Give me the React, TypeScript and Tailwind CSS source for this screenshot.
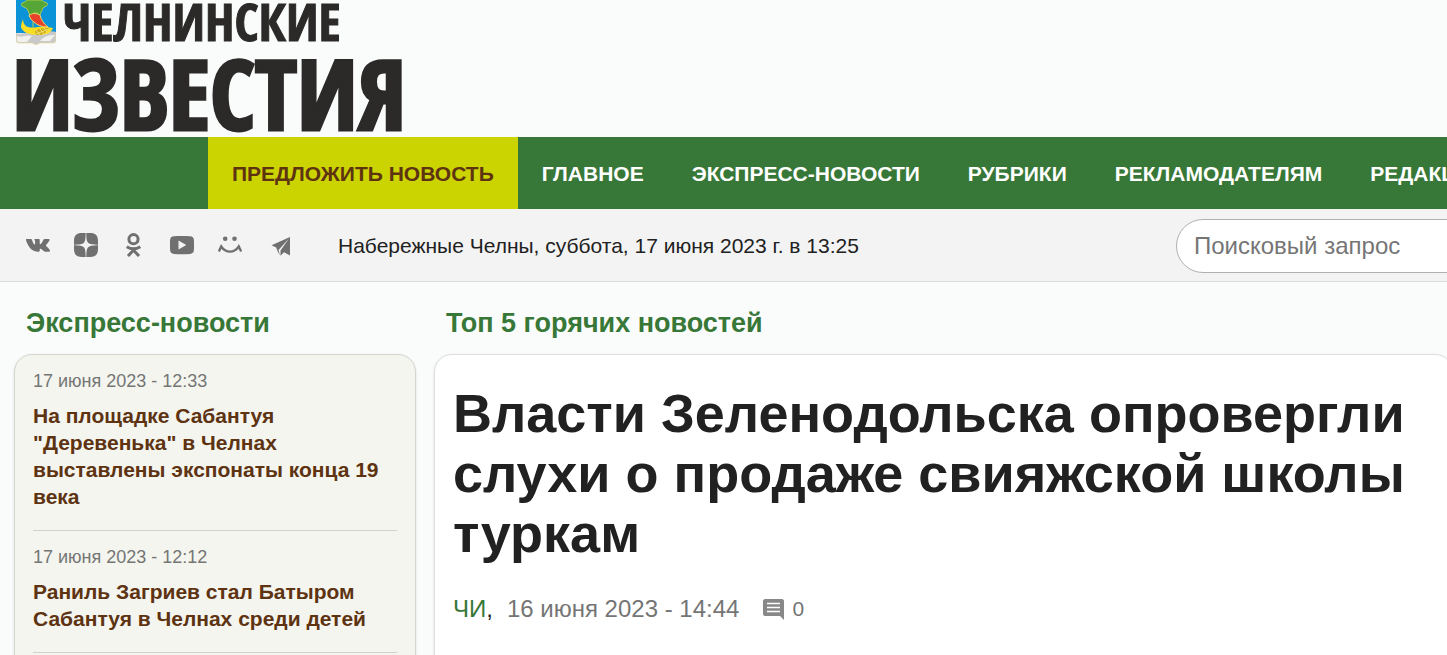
import React, { useState } from "react";

const navLinks = [
  "Главное",
  "Экспресс-новости",
  "Рубрики",
  "Рекламодателям",
  "Редакция",
];

const expressNews = [
  {
    date: "17 июня 2023 - 12:33",
    title:
      'На площадке Сабантуя "Деревенька" в Челнах выставлены экспонаты конца 19 века',
  },
  {
    date: "17 июня 2023 - 12:12",
    title: "Раниль Загриев стал Батыром Сабантуя в Челнах среди детей",
  },
];

const CityEmblem = () => (
  <svg viewBox="0 0 40 45" className="h-[45px] w-10 shrink-0" aria-hidden="true">
    <path d="M0 0h40v33H0z" fill="#0b93d8" />
    <path
      d="M0 33c5 2 8-1 13 0s9 2 14 0 9-2 13-1v8c0 2-1 3-3 3H24l-4 2-4-2H3c-2 0-3-1-3-3z"
      fill="#c9c9c9"
    />
    <path
      d="M1 36c6 2 9-2 15 0l-5 6H3c-1 0-2-1-2-2zM24 41c4-5 9-6 15-6l-5 6z"
      fill="#f0f0ee"
    />
    <path
      d="M0 33v7c0 2 1 3 3 3h13l4 2 4-2h13c2 0 3-1 3-3v-8"
      fill="none"
      stroke="#e9dc9a"
      strokeWidth=".7"
    />
    <path
      d="M7 19c0 4 2 7 5 8 6 2 14-2 19 0l6 1c-2 5-7 7-14 7-10 0-17-3-18-8 0-3 1-5 2-8z"
      fill="#f8de22"
    />
    <path d="M19 31c4-3 9-3 14-3-2 4-5 6-9 7h-4z" fill="#cda91c" />
    <path
      d="M20 30l4 5m0-6 4 5m0-6 3 4m-11 2 13-5"
      stroke="#fbf07e"
      strokeWidth=".8"
      fill="none"
    />
    <path
      d="M13 15c3-2 7-2 11 0 1 5 4 9 8 12-6 0-11-2-14-5-3-2-4-4-5-7z"
      fill="#e8432a"
      stroke="#f7d868"
      strokeWidth="1"
    />
    <path
      d="M11 0h14c2 1 3 2 6 3 1 2 0 3-3 4-2 1-1 3-3 5l-1 3c-2-2-3-2-5-2s-4 1-5 2l-2-4c0-2-2-3-4-4-3-1-3-2-2-4 3-1 4-2 5-3z"
      fill="#55a637"
      stroke="#d9dc52"
      strokeWidth=".7"
    />
    <path d="M17 22v5" stroke="#f8de22" strokeWidth=".8" />
  </svg>
);

const VkIcon = () => (
  <svg viewBox="0 0 24 24" className="size-6" fill="currentColor">
    <path d="M0 6h5c.6 0 .8.300 1 .9 1 3 2 4.600 2.700 4.600.3 0 .4-.3.400-1V8.200C9 7.200 8.300 7 8.300 6.500c0-.4.300-.6.700-.6h3.800c.7 0 .9.300.9 1v3.400c0 .6.200.9.500.9.9 0 2.400-2.500 3.200-4.400.3-.6.6-.8 1.200-.8h4c1 0 1.200.5.900 1.200-.6 1.500-3.500 4.600-3.500 5.200 0 .9 3.800 3.400 4 5.200.1.800-.4 1.200-1.300 1.200h-3.500c-1.600 0-3.300-3-4.700-3-.7 0-.8.5-.8 1.500s-.4 1.500-1.300 1.500C5.500 18.800 1.700 13 0 7z" />
  </svg>
);

const ZenIcon = () => (
  <svg viewBox="0 0 24 24" className="size-6" fill="currentColor">
    <path d="M11.700 0C11.600 6 11.200 8 10 9.700 8 11.200 5.500 11.600 0 11.700V8C0 2.500 2.500 0 8 0zM12.300 0H16c5.500 0 8 2.500 8 8v3.700c-5.500-.1-8-.5-9.900-2C12.600 8 12.400 6 12.300 0zM0 12.300c5.500.1 8.200.6 10 2.100 1.300 1.600 1.600 4 1.700 9.600H8c-5.500 0-8-2.500-8-8zM24 12.300V16c0 5.500-2.500 8-8 8h-3.700c.1-5.600.4-8 1.800-9.600 1.800-1.500 4.400-2 9.900-2.100z" />
  </svg>
);

const OkIcon = () => (
  <svg
    viewBox="0 0 24 24"
    className="size-6"
    fill="none"
    stroke="currentColor"
    strokeWidth="3"
  >
    <circle cx="11.500" cy="6.200" r="4.600" />
    <path d="M4.700 13.700c4.500 2.900 9.100 2.900 13.600 0M6 23l5.500-5.800L17 23" />
  </svg>
);

const YoutubeIcon = () => (
  <svg viewBox="0 0 24 24" className="size-6" fill="currentColor">
    <path
      fillRule="evenodd"
      d="M4 3.200c5-.4 11-.4 16 0 2.500 0 3.800 1.300 3.900 3.800.2 3.500.2 6.500 0 10-.1 2.500-1.400 3.800-3.900 3.900-5 .3-11 .3-16 0-2.500-.1-3.800-1.400-3.900-3.900-.2-3.500-.2-6.500 0-10C.2 4.500 1.500 3.200 4 3.200zM8.500 7.500v9L16.300 12z"
    />
  </svg>
);

const SmileIcon = () => (
  <svg viewBox="0 0 24 24" className="size-6">
    <circle cx="7.200" cy="5.800" r="2.300" fill="currentColor" />
    <circle cx="16.500" cy="5.800" r="2.300" fill="currentColor" />
    <path
      d="M.9 18.500 3.200 13.400c4.500 7 13.100 7 17.600 0l2.400 5.100"
      fill="none"
      stroke="currentColor"
      strokeWidth="2.400"
    />
  </svg>
);

const TelegramIcon = () => (
  <svg viewBox="0 0 24 24" className="size-6" fill="currentColor">
    <path d="M24 4v18.500l-6-3.200-3.500 3.500v-5.300L23 5.500 12.500 17l1.400 5C12 19.500 11.300 17.500 10.200 14.500L5.500 12.200z" />
  </svg>
);

const CommentIcon = () => (
  <svg viewBox="0 0 21 21" className="size-[21px]" aria-hidden="true">
    <path d="M2 0h17c1 0 2 1 2 2v19l-4-4H2c-1 0-2-1-2-2V2C0 1 1 0 2 0z" fill="#888" />
    <path d="M4 4.500h13M4 8.500h13M4 12.500h13" stroke="#fff" strokeWidth="1.700" />
  </svg>
);

const socials = [
  { name: "ВКонтакте", icon: <VkIcon /> },
  { name: "Дзен", icon: <ZenIcon /> },
  { name: "Одноклассники", icon: <OkIcon /> },
  { name: "YouTube", icon: <YoutubeIcon /> },
  { name: "Мой мир", icon: <SmileIcon /> },
  { name: "Telegram", icon: <TelegramIcon /> },
];

const Header = () => (
  <header>
    <a
      href="#"
      className="flex h-[137px] w-fit flex-col pl-3 font-['Open_Sans_Condensed','Liberation_Sans_Narrow',sans-serif] font-bold uppercase text-[#2b2a29]"
    >
      <span className="flex h-[45px] items-start gap-1.5 pl-1">
        <CityEmblem />
        <span className="text-[52px] leading-[42px] [-webkit-text-stroke:1px]">
          Челнинские
        </span>
      </span>
      <span className="text-[97px] leading-[94px] [-webkit-text-stroke:3px]">
        Известия
      </span>
    </a>
    <nav className="flex h-[72px] items-stretch bg-[#377737] pl-52 text-[21px] font-bold uppercase whitespace-nowrap text-white">
      <a
        href="#"
        className="flex items-center bg-[#cbd300] px-6 pt-0.5 text-[#5e3312]"
      >
        Предложить новость
      </a>
      {navLinks.map((link) => (
        <a key={link} href="#" className="flex items-center px-6 pt-0.5">
          {link}
        </a>
      ))}
    </nav>
  </header>
);

const InfoBar = () => {
  const [query, setQuery] = useState("");

  return (
    <div className="flex h-[73px] items-center border-b border-[#dcdcdc] bg-[#f3f3f3] pt-0.5 pr-3.5 pl-[26px]">
      <div className="flex gap-6 pb-0.5 text-[#707070]">
        {socials.map((social) => (
          <a key={social.name} href="#" aria-label={social.name}>
            {social.icon}
          </a>
        ))}
      </div>
      <p className="ml-12 text-[21px]">
        Набережные Челны, суббота, 17 июня 2023 г. в 13:25
      </p>
      <input
        type="search"
        aria-label="Поисковый запрос"
        placeholder="Поисковый запрос"
        value={query}
        onChange={(e) => setQuery(e.target.value)}
        className="-mr-3.5 ml-auto h-[54px] w-[291px] rounded-l-full border border-[#b0b0b0] bg-white px-[17px] text-2xl placeholder:text-[#757575]"
      />
    </div>
  );
};

const ExpressNews = () => (
  <section className="w-[402px] shrink-0">
    <h2 className="px-3 text-[27px] leading-9 font-bold text-[#377737]">
      Экспресс-новости
    </h2>
    <ul className="mt-[13px] rounded-[18px] border border-[#d3d6cd] bg-[#f3f5ee] px-[18px] pb-20 shadow-sm">
      {expressNews.map((item) => (
        <li
          key={item.date}
          className="border-b border-[#d0d2cb] pt-[15px] pb-5"
        >
          <time className="block text-lg leading-[22px] text-[#757575]">
            {item.date}
          </time>
          <a
            href="#"
            className="mt-2.5 block text-[21px] leading-[27px] font-bold text-[#5e3312]"
          >
            {item.title}
          </a>
        </li>
      ))}
    </ul>
  </section>
);

const TopNews = () => (
  <section className="min-w-0 flex-1">
    <h2 className="px-3 text-[27px] leading-9 font-bold text-[#377737]">
      Топ 5 горячих новостей
    </h2>
    <article className="mt-[13px] rounded-[18px] border border-[#dedede] bg-white px-[18px] pt-7 pb-20 shadow-sm">
      <h1 className="text-[54px] leading-[60px] font-bold">
        <a href="#">
          Власти Зеленодольска опровергли слухи о продаже свияжской школы туркам
        </a>
      </h1>
      <div className="mt-7 flex items-center text-2xl leading-9 text-[#757575]">
        <a href="#" className="text-[#377737]">
          ЧИ
        </a>
        <span className="text-[#212121]">,</span>
        <time className="ml-3.5">16 июня 2023 - 14:44</time>
        <a href="#" className="ml-6 flex items-center gap-2 text-[21px]">
          <CommentIcon />0
        </a>
      </div>
    </article>
  </section>
);

const App = () => {
  return (
    <div className="h-screen overflow-hidden bg-[#fafcfb] font-['Liberation_Sans',Arial,sans-serif] text-[#212121]">
      <div className="min-w-[1467px]">
        <Header />
        <InfoBar />
        <main className="flex items-start gap-[18px] px-3.5 pt-[23px]">
          <ExpressNews />
          <TopNews />
        </main>
      </div>
    </div>
  );
};

export default App;
